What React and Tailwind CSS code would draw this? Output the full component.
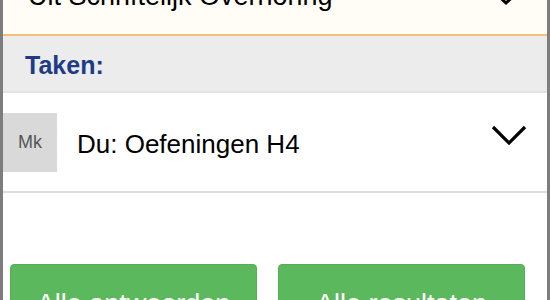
export default function App() {
  const font = { fontFamily: '"Liberation Sans", Arial, sans-serif' };
  return (
    <div
      className="w-[550px] h-[300px] overflow-hidden bg-white border-x-[3px] border-[#7d7d7d] flex flex-col"
      style={font}
    >
      {/* focused select at top */}
      <div className="h-[36px] shrink-0 bg-[#fffdf6] border-b-2 border-[#f1c07a] flex items-start justify-between pl-[25px] pr-[26px] overflow-hidden">
        <span className="mt-[-19px] text-[27px] leading-[30px] text-black whitespace-nowrap">
          Uit Schriftelijk Overhoring
        </span>
        <svg width="34" height="20" viewBox="0 0 34 20" className="mt-[-14px] mr-[-2px]" fill="none" stroke="black" strokeWidth="3">
          <path d="M2 3 L17 17 L32 3" />
        </svg>
      </div>

      {/* Taken header */}
      <div className="h-[57px] shrink-0 bg-[#ececec] border-b-2 border-[#e3e3e3] flex items-center pl-[22px]">
        <span className="mt-[3px] text-[25px] font-bold text-[#1d3b86] leading-none">Taken:</span>
      </div>

      {/* task row */}
      <div className="h-[100px] shrink-0 bg-white border-b-2 border-[#dcdcdc] flex items-center pr-[20px]">
        <div className="w-[54px] h-[59px] bg-[#d9d9d9] flex items-center justify-center">
          <span className="text-[18px] text-[#555]">Mk</span>
        </div>
        <span className="ml-[20px] mt-[4px] text-[26px] text-black flex-1 whitespace-nowrap">Du: Oefeningen H4</span>
        <svg width="36" height="22" viewBox="0 0 36 22" className="mb-[14px]" fill="none" stroke="black" strokeWidth="3.2">
          <path d="M2 3 L18 19 L34 3" />
        </svg>
      </div>

      {/* buttons */}
      <div className="flex gap-[21px] pl-[7px] pr-[21px] pt-[71px]">
        <div className="w-[247px] h-[60px] bg-[#5cb85c] rounded-[4px] border border-[#55ae55] flex justify-center pt-[24px]">
          <span className="text-[27px] leading-[30px] text-white whitespace-nowrap">Alle antwoorden</span>
        </div>
        <div className="w-[247px] h-[60px] bg-[#5cb85c] rounded-[4px] border border-[#55ae55] flex justify-center pt-[24px]">
          <span className="text-[27px] leading-[30px] text-white whitespace-nowrap">Alle resultaten</span>
        </div>
      </div>
    </div>
  );
}
